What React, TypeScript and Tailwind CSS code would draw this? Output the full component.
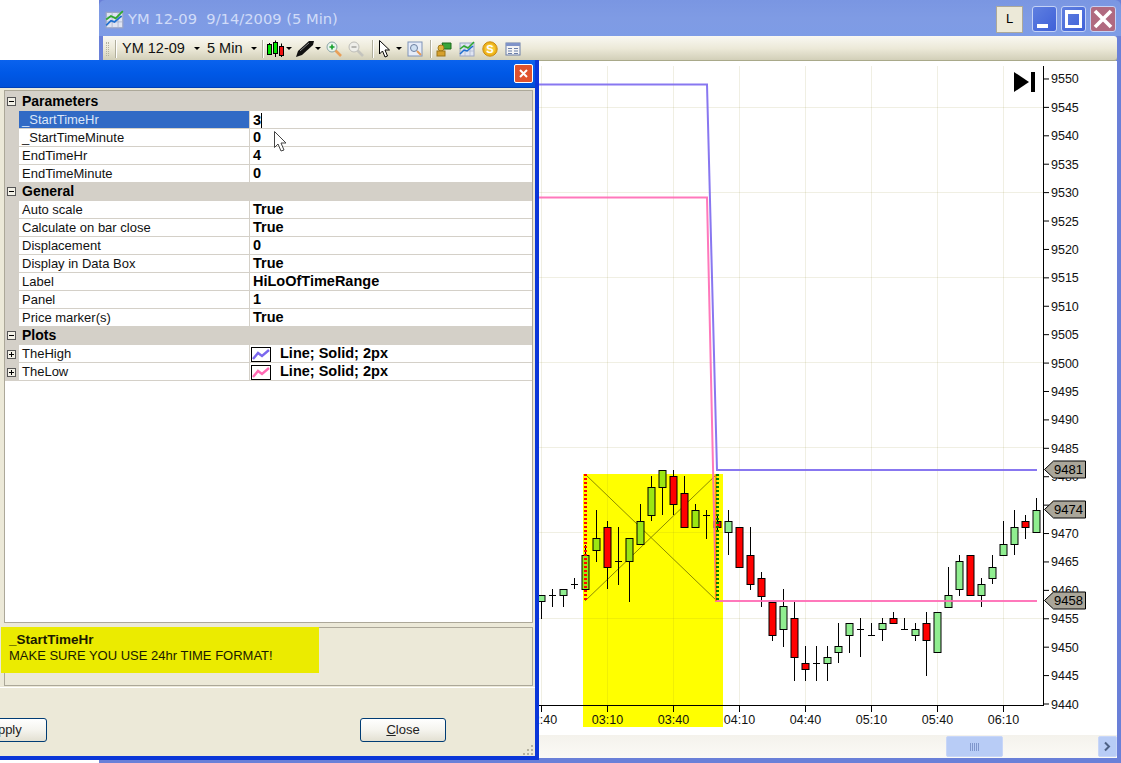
import React from "react";

type C = [number, number, number, number, number, string];
const G = "#90ee90";
const Y = "#9be612";
const R = "#ff0000";
const candles: C[] = [
  [541, 595, 619, 595, 601, G],
  [552, 589, 607, 595, 595, G],
  [563, 589, 607, 589, 595, G],
  [574, 578, 589, 584, 584, G],
  [585, 545, 589, 555, 589, Y],
  [596, 510, 562, 538, 550, Y],
  [607, 521, 589, 527, 567, R],
  [618, 527, 585, 561, 561, Y],
  [629, 538, 602, 538, 561, Y],
  [640, 504, 544, 521, 544, Y],
  [651, 476, 521, 487, 515, Y],
  [662, 470, 515, 470, 487, Y],
  [673, 470, 515, 476, 504, R],
  [684, 476, 527, 493, 527, R],
  [695, 504, 527, 510, 527, Y],
  [706, 510, 539, 515, 515, Y],
  [717, 516, 530, 521, 527, R],
  [728, 510, 555, 521, 532, G],
  [739, 527, 567, 527, 567, R],
  [750, 527, 590, 555, 584, R],
  [761, 572, 607, 578, 596, R],
  [772, 602, 641, 602, 635, R],
  [783, 589, 647, 606, 629, G],
  [794, 602, 681, 618, 657, R],
  [805, 646, 681, 663, 669, R],
  [816, 646, 681, 663, 663, G],
  [827, 646, 681, 657, 663, G],
  [838, 623, 663, 646, 652, G],
  [849, 623, 653, 623, 635, G],
  [860, 618, 657, 629, 629, G],
  [871, 623, 635, 635, 635, G],
  [882, 618, 641, 623, 629, G],
  [893, 612, 623, 618, 623, R],
  [904, 618, 629, 629, 629, G],
  [915, 623, 641, 629, 635, G],
  [926, 612, 676, 623, 640, R],
  [937, 612, 652, 612, 652, G],
  [948, 567, 607, 595, 607, G],
  [959, 555, 596, 561, 589, G],
  [970, 555, 595, 555, 595, R],
  [981, 578, 607, 584, 595, G],
  [992, 555, 584, 567, 578, G],
  [1003, 521, 555, 544, 555, G],
  [1014, 510, 555, 527, 544, G],
  [1025, 515, 539, 521, 527, R],
  [1036, 498, 532, 510, 532, G],
];

const grid = "rgba(140,130,40,0.13)";
const mono = { fontFamily: "'Liberation Sans', sans-serif" };

function Tag({ y, label }: { y: number; label: string }) {
  return (
    <g>
      <path
        d={`M1044.5 ${y} L1053.5 ${y - 8.5} H1085.5 V${y + 8.5} H1053.5 Z`}
        fill="#aaa69a"
        stroke="#000"
        strokeWidth="1"
      />
      <text x="1054" y={y + 4.5} fontSize="13" fill="#000" textLength="29">
        {label}
      </text>
    </g>
  );
}

function Chart() {
  const prices = Array.from({ length: 23 }, (_, i) => 9440 + i * 5);
  const py = (p: number) => 704 - (p - 9440) * 5.682;
  const times: [number, string][] = [
    [541, "02:40"],
    [607, "03:10"],
    [673, "03:40"],
    [739, "04:10"],
    [805, "04:40"],
    [871, "05:10"],
    [937, "05:40"],
    [1003, "06:10"],
  ];
  const hs = [107, 192, 277, 362, 447, 532, 618];
  return (
    <svg
      viewBox="103 61 1014 674"
      className="block h-[674px] w-[1014px]"
      style={mono}
    >
      <rect x="583" y="474" width="140" height="253" fill="#ffff00" />
      {hs.map((y) => (
        <line key={y} x1="103" x2="1043" y1={y + 0.5} y2={y + 0.5} stroke={grid} />
      ))}
      {times.map(([x]) => (
        <line key={x} x1={x + 0.5} x2={x + 0.5} y1="66" y2="705" stroke={grid} />
      ))}
      <line x1="585" y1="474" x2="717" y2="601" stroke="#8a8a00" strokeWidth="1" />
      <line x1="585" y1="601" x2="717" y2="474" stroke="#8a8a00" strokeWidth="1" />
      {candles.map(([x, t, b, bt, bb, c]) => (
        <g key={x}>
          <line x1={x + 0.5} x2={x + 0.5} y1={t} y2={b} stroke="#000" />
          {bt === bb ? (
            <line x1={x - 3} x2={x + 4} y1={bt + 0.5} y2={bt + 0.5} stroke="#000" />
          ) : (
            <rect x={x - 3} y={bt + 0.5} width="7" height={bb - bt} fill={c} stroke="#000" />
          )}
        </g>
      ))}
      <polyline points="103,84.5 707,84.5 717,470 1037,470" fill="none" stroke="#7b68ee" strokeWidth="2" opacity="0.9" />
      <polyline points="103,197.5 707,197.5 716,601 1037,601" fill="none" stroke="#ff69b4" strokeWidth="2" opacity="0.9" />
      <line x1="716" y1="474" x2="716" y2="601" stroke="#ff8c00" strokeWidth="2" opacity="0.85" />
      <line x1="585.5" x2="585.5" y1="474" y2="601" stroke="#ff0000" strokeWidth="3" strokeDasharray="2 2" />
      <line x1="717.5" x2="717.5" y1="474" y2="601" stroke="#008000" strokeWidth="3" strokeDasharray="2 2" />
      <line x1="1043.5" x2="1043.5" y1="66" y2="705" stroke="#000" />
      <line x1="103" x2="1044" y1="705.5" y2="705.5" stroke="#000" />
      {prices.map((p) => (
        <g key={p}>
          <line x1="1043" x2="1049" y1={py(p)} y2={py(p)} stroke="#000" />
          <text x="1051" y={py(p) + 4.5} fontSize="12.5" fill="#111">
            {p}
          </text>
        </g>
      ))}
      {times.map(([x, t]) => (
        <g key={t}>
          <line x1={x + 0.5} x2={x + 0.5} y1="705" y2="712" stroke="#000" />
          <text x={x + 0.5} y="724" fontSize="12.5" textAnchor="middle" fill="#111">
            {t}
          </text>
        </g>
      ))}
      <Tag y={469.5} label="9481" />
      <Tag y={509.5} label="9474" />
      <Tag y={600.5} label="9458" />
      <path d="M1014 72 L1029 82 L1014 92 Z" fill="#000" />
      <rect x="1031" y="72" width="4" height="20" fill="#000" />
    </svg>
  );
}

function Arrow() {
  return <span className="ml-[5px] inline-block h-0 w-0 border-x-[3px] border-t-[3px] border-x-transparent border-t-black" />;
}

function Sep() {
  return <span className="mx-[5px] h-[18px] w-px bg-[#b0ae9c] shadow-[1px_0_0_#fff]" />;
}

function TinyChart({ w = 16 }: { w?: number }) {
  return (
    <svg width={w} height={w} viewBox="0 0 16 16">
      <rect x="1" y="2" width="14" height="13" fill="#dfe4f2" stroke="#9aa5c4" />
      <path d="M1 6H15M1 10H15M6 2V15M11 2V15" stroke="#aab4cf" strokeWidth="0.7" />
      <path d="M1 13 L5 9 L8 10 L14 5" fill="none" stroke="#1f6fd0" strokeWidth="1.5" />
      <path d="M1 8 L5 5 L9 7 L15 1" fill="none" stroke="#2fa82f" strokeWidth="1.5" />
    </svg>
  );
}

function Toolbar() {
  return (
    <div className="flex h-[25px] items-center rounded-r-[3px] bg-gradient-to-b from-[#f9f8f2] via-[#ece9d8] to-[#d0cdb6] pl-[2px] text-[14.5px] text-[#111] shadow-[inset_0_-1px_0_#a9a98a]">
      <span className="ml-[1px] h-[14px] w-[3px] border-x border-dotted border-[#b5b3a0]" />
      <span className="ml-[6px] mr-[6px] h-[18px] w-px bg-[#b0ae9c] shadow-[1px_0_0_#fff]" />
      <span className="w-[67px] whitespace-nowrap">YM 12-09</span>
      <Arrow />
      <span className="ml-[7px] w-[36px] whitespace-nowrap">5 Min</span>
      <span className="ml-[3px] flex"><Arrow /></span>
      <Sep />
      <svg width="20" height="18" viewBox="0 0 20 18" className="-ml-[2px]">
        <path d="M3.5 3V15M9.5 0.5V17M15.5 3.5V17" stroke="#000" />
        <rect x="1.5" y="4.5" width="4" height="10" fill="#00e600" stroke="#000" />
        <rect x="7.5" y="2.5" width="4" height="11" fill="#00e600" stroke="#000" />
        <rect x="13.5" y="6.5" width="4" height="9" fill="#ee1111" stroke="#000" />
      </svg>
      <span className="-ml-[5px] flex"><Arrow /></span>
      <svg width="20" height="18" viewBox="0 0 20 18" className="ml-[3px]">
        <path d="M1 17 L3 11 L14 1 L19 1 L18 5 L7 15 Z" fill="#111" />
        <path d="M5 11 L14 3" stroke="#888" />
      </svg>
      <span className="-ml-[5px] flex"><Arrow /></span>
      <svg width="16" height="16" viewBox="0 0 16 16" className="ml-[5px]">
        <circle cx="6" cy="6" r="5" fill="#e9f4ec" stroke="#8aa4a8" />
        <path d="M3.5 6H8.5M6 3.5V8.5" stroke="#14a02c" strokeWidth="1.6" />
        <path d="M9.5 9.5L15 15" stroke="#e9a05a" strokeWidth="2.6" />
      </svg>
      <svg width="16" height="16" viewBox="0 0 16 16" className="ml-[6px]">
        <circle cx="6" cy="6" r="5" fill="#eeeeea" stroke="#bdbdb8" />
        <path d="M3.5 6H8.5" stroke="#a8a8a4" strokeWidth="1.6" />
        <path d="M9.5 9.5L15 15" stroke="#c4c4be" strokeWidth="2.6" />
      </svg>
      <span className="ml-[3px] flex items-center"><Sep /></span>
      <svg width="14" height="20" viewBox="0 0 14 20">
        <path d="M1.5 1.5 V15 L4.5 12 L7 18 L9.5 17 L7 11 H11.5 Z" fill="#fff" stroke="#000" />
      </svg>
      <span className="-ml-[1px] flex"><Arrow /></span>
      <svg width="16" height="16" viewBox="0 0 16 16" className="ml-[5px]">
        <rect x="1" y="1" width="14" height="14" fill="#e6ecf8" stroke="#7f93b8" />
        <circle cx="7" cy="7" r="3.5" fill="#cfe0f2" stroke="#6c7fa0" />
        <path d="M10 10L14 14" stroke="#e59a55" strokeWidth="2" />
      </svg>
      <span className="ml-[2px] flex items-center"><Sep /></span>
      <svg width="16" height="16" viewBox="0 0 16 16">
        <path d="M6 2 H15 V8 H8 Z" fill="#3aa53a" stroke="#1d6b1d" />
        <circle cx="5" cy="7" r="3" fill="#e3b23a" stroke="#a37a1a" />
        <rect x="1" y="10" width="8" height="5" fill="#d6a02c" stroke="#9c7416" />
      </svg>
      <span className="ml-[7px] flex"><TinyChart /></span>
      <svg width="16" height="16" viewBox="0 0 16 16" className="ml-[7px]">
        <circle cx="8" cy="8" r="7.2" fill="#eeb31a" stroke="#c98a10" />
        <circle cx="8" cy="8" r="5" fill="#f5c93a" />
        <text x="8" y="12" textAnchor="middle" fontSize="11" fontWeight="700" fill="#fff" style={mono}>S</text>
      </svg>
      <svg width="16" height="16" viewBox="0 0 16 16" className="ml-[7px]">
        <rect x="1" y="2" width="14" height="12" fill="#f4f4f4" stroke="#6b7ea8" />
        <rect x="1" y="2" width="14" height="3" fill="#7f93c8" />
        <path d="M3 7.5H7M9 7.5H13M3 10H7M9 10H13M3 12.5H7M9 12.5H13" stroke="#6b7ea8" />
      </svg>
    </div>
  );
}

function ChartWindow() {
  return (
    <div className="absolute left-[99px] top-0 flex h-[763px] w-[1022px] flex-col bg-[#6a80d8] pb-[5px] pl-[4px] pr-[4px]" style={mono}>
      <div className="-mx-[4px] flex h-[36px] items-center rounded-t-[6px] bg-gradient-to-b from-[#7a96e2] via-[#7f9be4] to-[#7e9ce6] pl-[6px] pr-[5px] pt-[2px]">
        <TinyChart w={19} />
        <span className="ml-[4px] mt-[1px] whitespace-pre text-[14.7px] text-[#d0dbf8]" style={{ fontFamily: "'DejaVu Sans', sans-serif" }}>
          YM 12-09  9/14/2009 (5 Min)
        </span>
        <div className="ml-auto flex items-center">
          <span className="flex h-[27px] w-[27px] items-center justify-center border border-[#aca899] bg-[#ece9d8] text-[13px] text-black">L</span>
          <span className="ml-[9px] flex h-[26px] w-[25px] items-end rounded-[3px] border border-[#c4d2f6] bg-gradient-to-br from-[#5f7fe0] to-[#3f60d8] pb-[3px] pl-[4px]">
            <span className="h-[4px] w-[11px] bg-white" />
          </span>
          <span className="ml-[4px] flex h-[26px] w-[25px] items-center justify-center rounded-[3px] border border-[#c4d2f6] bg-gradient-to-br from-[#5f7fe0] to-[#3f60d8]">
            <span className="h-[18px] w-[17px] border-[3px] border-t-[4px] border-white" />
          </span>
          <span className="ml-[4px] flex h-[26px] w-[26px] items-center justify-center rounded-[3px] border border-[#c4d2f6] bg-[#b06a80]">
            <svg width="22" height="22" viewBox="0 0 22 22">
              <path d="M3 3L19 19M19 3L3 19" stroke="#fff" strokeWidth="3.6" />
            </svg>
          </span>
        </div>
      </div>
      <Toolbar />
      <div className="flex-1 bg-white">
        <Chart />
      </div>
      <div className="flex h-[23px] items-center bg-gradient-to-b from-[#f4f2ec] to-[#fbfaf6]">
        <div className="ml-[843px] flex h-[21px] w-[57px] items-center justify-center rounded-[2px] border border-[#c8d6f8] bg-[#b8ccf6]">
          <span className="h-[8px] w-[9px] bg-[repeating-linear-gradient(90deg,#7f96cc_0_1px,transparent_1px_2px)]" />
        </div>
        <div className="ml-auto flex h-[21px] w-[19px] items-center justify-center rounded-[2px] border border-[#c8d6f8] bg-[#b8ccf6]">
          <svg width="9" height="11" viewBox="0 0 9 11">
            <path d="M2 1.5L6 5.5L2 9.5" fill="none" stroke="#4d6185" strokeWidth="2" />
          </svg>
        </div>
      </div>
    </div>
  );
}

function Expander({ plus }: { plus?: boolean }) {
  return (
    <span className="relative flex h-[9px] w-[9px] items-center justify-center border border-[#555] bg-[#f2f0e6]">
      <span className="h-px w-[5px] bg-black" />
      {plus && <span className="absolute h-[5px] w-px bg-black" />}
    </span>
  );
}

function Category({ label, first }: { label: string; first?: boolean }) {
  return (
    <div className={`flex items-center bg-[#d4d0c8] pl-[2px] ${first ? "h-[20px]" : "h-[18px] pb-[2px]"}`}>
      <Expander />
      <span className="ml-[6px] text-[14px] font-bold leading-none text-black">{label}</span>
    </div>
  );
}

function Row({ name, value, selected, plus, swatch }: { name: string; value: string; selected?: boolean; plus?: boolean; swatch?: string }) {
  return (
    <div className="flex h-[18px]">
      <div className="flex w-[14px] items-center justify-center bg-[#d4d0c8] pr-[1px]">
        {plus && <Expander plus />}
      </div>
      <div className={`flex w-[230px] items-center border-b border-[#d4d0c8] pl-[3px] pt-[1px] text-[13px] ${selected ? "bg-[#316ac5] text-[#dbe6f8]" : "bg-white text-[#111]"}`}>
        {name}
      </div>
      <div className="flex flex-1 items-center border-b border-l border-[#d4d0c8] bg-white pl-[3px] pt-[1px] text-[14.5px] font-bold text-black">
        {swatch && (
          <svg width="20" height="15" viewBox="0 0 20 15" className="-ml-[2px] mr-[9px]">
            <rect x="0.5" y="0.5" width="19" height="14" fill="#fff" stroke="#000" />
            <path d="M2 12 L7 6 L11 9 L18 3" fill="none" stroke={swatch} strokeWidth="2.4" />
          </svg>
        )}
        <span className={selected ? "border-r border-black pr-0 leading-[15px]" : ""}>{value}</span>
      </div>
    </div>
  );
}

function Dialog() {
  return (
    <div className="absolute left-0 top-[60px] flex h-[700px] w-[539px] flex-col border-b-[4px] border-r-[4px] border-[#0a36d8] bg-[#ece9d8]" style={mono}>
      <div className="flex h-[27px] items-center justify-end bg-gradient-to-b from-[#0a62ee] via-[#0058e6] to-[#0050d8] pr-[2px] shadow-[0_1px_0_#0040b8]">
        <span className="flex h-[19px] w-[19px] items-center justify-center rounded-[2px] border border-white bg-[#e0532e]">
          <svg width="11" height="11" viewBox="0 0 11 11">
            <path d="M2 2L9 9M9 2L2 9" stroke="#fff" strokeWidth="2" />
          </svg>
        </span>
      </div>
      <div className="flex flex-1 flex-col pl-[4px] pr-[2px] pt-[3px]">
        <div className="h-[533px] border border-[#aca899] bg-white">
          <Category label="Parameters" first />
          <Row name="_StartTimeHr" value="3" selected />
          <Row name="_StartTimeMinute" value="0" />
          <Row name="EndTimeHr" value="4" />
          <Row name="EndTimeMinute" value="0" />
          <Category label="General" />
          <Row name="Auto scale" value="True" />
          <Row name="Calculate on bar close" value="True" />
          <Row name="Displacement" value="0" />
          <Row name="Display in Data Box" value="True" />
          <Row name="Label" value="HiLoOfTimeRange" />
          <Row name="Panel" value="1" />
          <Row name="Price marker(s)" value="True" />
          <Category label="Plots" />
          <Row name="TheHigh" value="Line; Solid; 2px" plus swatch="#7b68ee" />
          <Row name="TheLow" value="Line; Solid; 2px" plus swatch="#ff69b4" />
        </div>
        <div className="relative mt-[4px] h-[59px] border border-[#aca899]">
          <div className="absolute -left-[4px] -top-px flex h-[46px] w-[318px] flex-col bg-[#ebeb00] pl-[8px] pt-[5px] leading-[16px] text-[#1a1a00]">
            <span className="text-[13.5px] font-bold leading-[16px]">_StartTimeHr</span>
            <span className="text-[13px]">MAKE SURE YOU USE 24hr TIME FORMAT!</span>
          </div>
        </div>
      </div>
      <div className="relative mt-[1px] flex h-[69px] items-start justify-between border-t border-white pl-0 pr-[89px] pt-[30px]">
        <Btn className="-ml-[30px] w-[77px]"><span className="pr-[6px]">Apply</span></Btn>
        <Btn className="w-[86px]"><span><span className="underline">C</span>lose</span></Btn>
        <svg width="12" height="12" viewBox="0 0 12 12" className="absolute bottom-[1px] right-[1px]">
          <path d="M9 2h2v2H9zM5 6h2v2H5zM9 6h2v2H9zM1 10h2v2H1zM5 10h2v2H5zM9 10h2v2H9z" fill="#b5b2a0" />
        </svg>
      </div>
    </div>
  );
}

function Btn({ children, className }: { children: React.ReactNode; className: string }) {
  return (
    <div className={`flex h-[24px] items-center justify-center rounded-[3px] border border-[#003c74] bg-gradient-to-b from-white via-[#f5f4ee] to-[#e3e0d2] text-[13px] text-[#222] ${className}`}>
      {children}
    </div>
  );
}

export default function App() {
  return (
    <div className="relative h-[763px] w-[1121px] overflow-hidden bg-white">
      <ChartWindow />
      <span className="absolute left-[64px] top-[758px] text-[13px] text-black" style={mono}>M</span>
      <Dialog />
      <svg width="15" height="23" viewBox="0 0 15 23" className="absolute left-[273px] top-[130px]">
        <path d="M1.5 1.5 V17.5 L5 14 L8 21 L11 20 L8 13 H13 Z" fill="#fff" stroke="#444" />
      </svg>
    </div>
  );
}
